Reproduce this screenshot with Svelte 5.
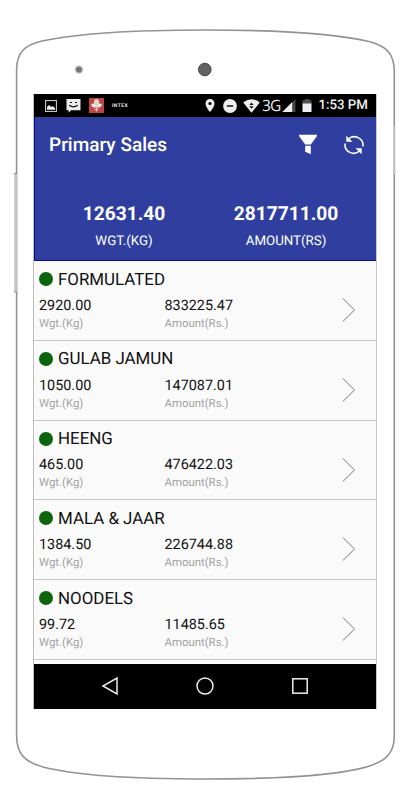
<script>
  const totals = [
    { value: "12631.40", label: "WGT.(KG)" },
    { value: "2817711.00", label: "AMOUNT(RS)" },
  ];

  const items = [
    { name: "FORMULATED", weight: "2920.00", amount: "833225.47" },
    { name: "GULAB JAMUN", weight: "1050.00", amount: "147087.01" },
    { name: "HEENG", weight: "465.00", amount: "476422.03" },
    { name: "MALA & JAAR", weight: "1384.50", amount: "226744.88" },
    { name: "NOODELS", weight: "99.72", amount: "11485.65" },
  ];
</script>

<div class="phone">
  <!-- Device outline, behind the screen -->
  <svg class="frame" viewBox="0 0 412 800" aria-hidden="true">
    <path
      d="M16.6 70 C16.6 52 25 45 42 41 C75 34 125 30 205.5 30 C286 30 337 34 369 41.5 C387 46 394.3 54 394.3 72 V736 C394.3 754 385 761 368 766.5 C335 776 282 779 205.5 779 C129 779 76 775.5 43 767 C25 762 16.6 754 16.6 736 Z"
      fill="#fff"
      stroke="#939393"
      stroke-width="1.6"
    />
    <path d="M15.7 173 V292" stroke="#c7c7c7" stroke-width="3" />
    <path d="M14 173.5 H17 M14 292 H17" stroke="#888" />
    <path d="M394.2 126 V174" stroke="#c3c3c3" stroke-width="2" />
    <circle cx="79" cy="69.6" r="4.2" fill="#bdbdbd" />
    <circle cx="79" cy="69.6" r="2.9" fill="#777" />
    <circle cx="204.8" cy="69.5" r="6.3" fill="#626262" stroke="#454545" />
  </svg>

  <div class="screen">
    <div class="status">
      <svg class="ic picture" width="12" height="12" viewBox="0 0 12 12">
        <rect x=".6" y=".6" width="10.8" height="10.8" fill="none" stroke="#ddd" stroke-width="1" />
        <path d="M2 9.8V7l2-2 2 2 1.5-1 2.5 2v1.8z" fill="#eee" />
      </svg>
      <svg class="ic message" width="15" height="15" viewBox="0 0 15 15">
        <path d="M.5 1h14v11.300H5L2.700 14.800v-2.500H.5z" fill="#ededed" />
        <path d="M4 4.500h2M9 4.500h2M3.300 7.300q4.200 3.200 8.400 0" fill="none" stroke="#111" stroke-width="1.200" />
      </svg>
      <svg class="ic flower" width="15" height="15" viewBox="0 0 15 15">
        <rect width="15" height="15" fill="#bd4542" />
        <ellipse cx="7.500" cy="4.500" rx="2.700" ry="3.600" fill="#dcd3d1" />
        <ellipse cx="4.600" cy="7.600" rx="2.700" ry="1.700" transform="rotate(35 4.600 7.600)" fill="#ece7e5" />
        <ellipse cx="10.400" cy="7.600" rx="2.700" ry="1.700" transform="rotate(-35 10.400 7.600)" fill="#ece7e5" />
        <path d="M7.500 8v5.500M5.500 11.800q2-1.200 4 0" fill="none" stroke="#dccbc9" stroke-width="1.100" />
      </svg>
      <span class="brand">INTEX</span>
      <span class="spacer"></span>
      <svg class="ic pin" width="10" height="13" viewBox="0 0 10 13">
        <path d="M5 0a4.500 4.500 0 0 0-4.500 4.500C.5 7.800 5 13 5 13s4.500-5.200 4.500-8.500A4.500 4.500 0 0 0 5 0z" fill="#eee" />
        <circle cx="5" cy="4.500" r="1.600" fill="#000" />
      </svg>
      <svg class="ic dnd" width="14" height="14" viewBox="0 0 14 14">
        <circle cx="7" cy="7" r="6.900" fill="#eee" />
        <path d="M3.800 7h6.400" stroke="#111" stroke-width="1.500" />
      </svg>
      <svg class="ic wifi" width="17" height="14" viewBox="0 0 17 14">
        <path d="M.2 3.400Q8.500-3 16.800 3.400L8.500 13.800z" fill="#eee" />
        <path d="M8.500 3.400l2.200 2.500H6.300zM6.300 7.300h4.400l-2.200 2.500z" fill="#111" />
      </svg>
      <span class="network">3G</span>
      <svg class="ic signal" width="14" height="13" viewBox="0 0 14 13">
        <path d="M13.500 0v13H10V3.500z" fill="#444" />
        <path d="M10.200 3v10H.3z" fill="#eee" />
      </svg>
      <svg class="ic battery" width="10" height="13" viewBox="0 0 10 13">
        <path d="M.5 1.300h2.500V0h4v1.300h2.500V5h-9z" fill="#505050" />
        <path d="M.5 4.500h9V13h-9z" fill="#eee" />
      </svg>
      <span class="time">1:53 PM</span>
    </div>

    <header>
      <div class="toolbar">
        <h1>Primary Sales</h1>
        <button class="filter" aria-label="Filter">
          <svg width="20" height="21" viewBox="0 0 20 21">
            <path d="M1 .8h18v1.300L12.800 10.500H7.200L1 2.100z" fill="#fff" />
            <path d="M7.200 11.700h5.600v8.600l-5.600-2.600z" fill="#fff" />
          </svg>
        </button>
        <button class="refresh" aria-label="Refresh">
          <svg width="20" height="20" viewBox="0 0 20 20">
            <g fill="none" stroke="#fff" stroke-width="1.600">
              <path d="M4.200 4.200A8.700 8.700 0 0 1 18.900 11.500" />
              <path d="M15.800 15.800A8.700 8.700 0 0 1 1.100 8.500" />
            </g>
            <path d="M2.300.8v6h6.200zM17.700 19.200v-6h-6.200z" fill="#fff" />
          </svg>
        </button>
      </div>
      <div class="totals">
        {#each totals as total}
          <div class="total">
            <strong>{total.value}</strong>
            <span>{total.label}</span>
          </div>
        {/each}
      </div>
    </header>

    <main>
      {#each items as item}
        <div class="row">
          <div class="name"><i class="dot"></i><span>{item.name}</span></div>
          <div class="figures">
            <div class="figure">
              <b>{item.weight}</b>
              <small>Wgt.(Kg)</small>
            </div>
            <div class="figure">
              <b>{item.amount}</b>
              <small>Amount(Rs.)</small>
            </div>
            <svg class="chevron" width="14" height="24" viewBox="0 0 14 24">
              <path d="M1 .6l11.500 11.400L1 23.400" fill="none" stroke="#777" stroke-width="1" />
            </svg>
          </div>
        </div>
      {/each}
    </main>

    <nav>
      <svg width="18" height="20" viewBox="0 0 18 20">
        <path d="M16 2v16L2 10z" fill="none" stroke="#eee" stroke-width="1.500" />
      </svg>
      <svg width="18" height="20" viewBox="0 0 18 20">
        <circle cx="9" cy="10" r="8" fill="none" stroke="#eee" stroke-width="1.500" />
      </svg>
      <svg width="18" height="20" viewBox="0 0 18 20">
        <rect x="1.800" y="2.800" width="14.400" height="14.400" fill="none" stroke="#eee" stroke-width="1.500" />
      </svg>
    </nav>
  </div>
</div>

<style>
  :global(body) {
    margin: 0;
    background: #fff;
  }
  .phone {
    position: relative;
    box-sizing: border-box;
    width: 412px;
    height: 800px;
    padding: 94px 35px 0 33px;
    overflow: hidden;
    font-family: Roboto, sans-serif;
    text-rendering: geometricPrecision;
  }
  .frame {
    position: absolute;
    inset: 0;
    width: 412px;
    height: 800px;
  }
  .screen {
    position: relative;
    box-sizing: border-box;
    display: flex;
    flex-direction: column;
    height: 615px;
    border-left: 1px solid #bbb;
    border-right: 1px solid #c8c8c8;
    background: #fafafa;
  }
  .status {
    display: flex;
    align-items: center;
    box-sizing: border-box;
    height: 23px;
    padding: 0 8px 0 11px;
    background: #000;
    color: #eee;
  }
  .ic { flex-shrink: 0; }
  .message { margin-left: 9px; }
  .flower { margin-left: 8px; }
  .brand {
    margin-left: 8px;
    font-size: 5px;
    font-weight: 700;
    letter-spacing: 0.4px;
  }
  .spacer { flex: 1; }
  .dnd { margin-left: 8px; }
  .wifi { margin-left: 6px; }
  .network {
    width: 18px;
    margin-left: 2px;
    font-family: "Open Sans", sans-serif;
    font-size: 15.5px;
    letter-spacing: -0.9px;
    line-height: 23px;
  }
  .signal { margin-left: 2px; }
  .battery { margin-left: 6px; }
  .time {
    width: 50px;
    margin-left: 6px;
    font-size: 13.3px;
    font-weight: 500;
    text-align: right;
    white-space: nowrap;
  }
  header {
    box-sizing: border-box;
    height: 144px;
    border: solid #0a0a92;
    border-width: 0 0 1px 1px;
    background: #303f9f;
    color: #fff;
  }
  .toolbar {
    display: flex;
    align-items: center;
    height: 55px;
    padding: 0 12px 0 14px;
  }
  h1 {
    flex: 1;
    margin: 0;
    font-size: 19px;
    font-weight: 500;
  }
  button {
    display: flex;
    padding: 0;
    border: 0;
    background: none;
  }
  .refresh { margin-left: 26px; }
  .totals {
    display: grid;
    grid-template-columns: 178px 146px;
    padding-top: 30px;
  }
  .total {
    display: flex;
    flex-direction: column;
    align-items: center;
  }
  .total strong {
    font-size: 19.2px;
    font-weight: 700;
    line-height: 24px;
  }
  .total span {
    margin-top: 6px;
    font-size: 13.3px;
    line-height: 20px;
  }
  main { flex: 1; }
  .row {
    box-sizing: border-box;
    height: 79.8px;
    padding: 6px 20px 0 5px;
    border-bottom: 1px solid #c9c9c9;
    color: #111;
  }
  .name {
    display: flex;
    align-items: center;
    gap: 5px;
    height: 24px;
    font-size: 16.9px;
  }
  .name span { padding-top: 1px; }
  .dot {
    width: 14px;
    height: 14px;
    border-radius: 50%;
    background: #0c640c;
  }
  .figures {
    display: grid;
    grid-template-columns: 125.5px 1fr 14px;
  }
  .figure {
    display: flex;
    flex-direction: column;
    padding-top: 4.8px;
  }
  .figure b {
    font-size: 14.4px;
    font-weight: 400;
    line-height: 20px;
  }
  .figure small {
    color: #a3a3a3;
    font-size: 11.4px;
    line-height: 15px;
  }
  .chevron { margin-top: 7px; }
  nav {
    display: flex;
    align-items: center;
    justify-content: center;
    gap: 77px;
    height: 45.5px;
    background: #000;
  }
</style>
